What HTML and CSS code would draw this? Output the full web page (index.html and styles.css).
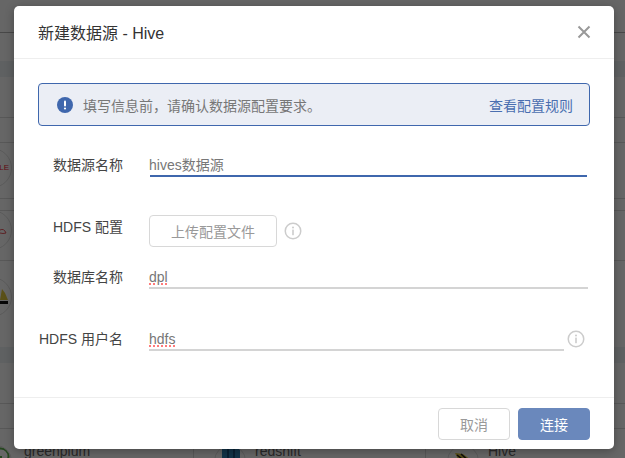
FILE: index.html
```html
<!DOCTYPE html>
<html lang="zh-CN">
<head>
    <meta charset="UTF-8">
    <meta name="viewport" content="width=device-width, initial-scale=1.0">
    <title>新建数据源 - Hive</title>
    <link rel="stylesheet" href="styles.css">
</head>
<body>

    <!-- page behind the dialog -->
    <div class="page">
        <div class="page_row page_top"></div>
        <div class="page_gap"></div>
        <div class="page_band"></div>
        <div class="page_row row_41"></div>
        <div class="page_row row_25"></div>
        <div class="page_row row_51">
            <div class="logo logo_oracle"><span>ORACLE</span></div>
        </div>
        <div class="page_row row_12"></div>
        <div class="page_row row_51">
            <div class="logo logo_red">
                <svg width="38" height="38" viewBox="0 0 38 38"><path d="M27 19 q4 -2 6 3 q-3 1 -6 0" fill="none" stroke="#e8545c" stroke-width="1"/></svg>
            </div>
        </div>
        <div class="page_plain">
            <div class="logo logo_bee">
                <svg width="38" height="38" viewBox="0 0 38 38"><path d="M27 22 L29 11 L32 15 L35 22 z" fill="#e2c83c"/><path d="M24 23 h11 v3 h-11 z" fill="#111"/></svg>
            </div>
        </div>
        <div class="page_band"></div>
        <div class="page_row row_41"></div>
        <div class="page_row row_25"></div>
        <div class="source_list">
            <div class="source source_gp">
                <div class="source_logo">
                    <svg width="30" height="30" viewBox="0 0 30 30"><circle cx="20" cy="10" r="7.5" fill="none" stroke="#5cb04e" stroke-width="2"/><path d="M20 10 v8" stroke="#5cb04e" stroke-width="2"/></svg>
                </div>
                <span>greenplum</span>
            </div>
            <div class="source source_rs">
                <div class="source_logo">
                    <svg width="30" height="30" viewBox="0 0 30 30"><rect x="7" y="0" width="18" height="30" fill="#2f7fb5"/><rect x="12" y="0" width="2" height="30" fill="#17527f"/><rect x="18" y="0" width="2" height="30" fill="#17527f"/></svg>
                </div>
                <span>redshift</span>
            </div>
            <div class="source source_hive">
                <div class="source_logo">
                    <svg width="30" height="30" viewBox="0 0 30 30"><path d="M7 7 l8 1 8 6 -1 9 -8 -2 z" fill="#e2c83c"/><path d="M9 9 l10 8 M8 13 l9 7 M13 8 l9 8" stroke="#222" stroke-width="1.5"/></svg>
                </div>
                <span>Hive</span>
            </div>
        </div>
    </div>

    <div class="mask"></div>

    <div class="dialog">
        <div class="dialog_head">
            <h2>新建数据源 - Hive</h2>
            <svg class="close_icon" width="14" height="14" viewBox="0 0 14 14"><path d="M1.5 1.5 L12.5 12.5 M12.5 1.5 L1.5 12.5" stroke="#999" stroke-width="2" fill="none"/></svg>
        </div>

        <div class="dialog_body">
            <div class="notice">
                <svg class="notice_icon" width="16" height="16" viewBox="0 0 16 16"><circle cx="8" cy="8" r="8" fill="#3f67ad"/><rect x="7" y="3.5" width="2" height="6" rx="1" fill="#fff"/><circle cx="8" cy="11.5" r="1.1" fill="#fff"/></svg>
                <span class="notice_text">填写信息前，请确认数据源配置要求。</span>
                <a class="notice_link">查看配置规则</a>
            </div>

            <div class="form_row row_name">
                <label>数据源名称</label>
                <div class="field field_active">hives数据源</div>
            </div>

            <div class="form_row row_upload">
                <label>HDFS 配置</label>
                <button class="upload_button">上传配置文件</button>
                <svg class="info_icon" width="18" height="18" viewBox="0 0 18 18"><circle cx="9" cy="9" r="7.75" fill="none" stroke="#ccc" stroke-width="1.5"/><rect x="8.2" y="7.6" width="1.6" height="5.6" fill="#ccc"/><circle cx="9" cy="5.4" r="1" fill="#ccc"/></svg>
            </div>

            <div class="form_row row_db">
                <label>数据库名称</label>
                <div class="field field_db"><span class="misspelt">dpl</span></div>
            </div>

            <div class="form_row row_user">
                <label>HDFS 用户名</label>
                <div class="field"><span class="misspelt">hdfs</span></div>
                <svg class="info_icon" width="18" height="18" viewBox="0 0 18 18"><circle cx="9" cy="9" r="7.75" fill="none" stroke="#ccc" stroke-width="1.5"/><rect x="8.2" y="7.6" width="1.6" height="5.6" fill="#ccc"/><circle cx="9" cy="5.4" r="1" fill="#ccc"/></svg>
            </div>
        </div>

        <div class="dialog_foot">
            <button class="cancel_button">取消</button>
            <button class="connect_button">连接</button>
        </div>
    </div>

</body>
</html>
```

FILE: styles.css
```css
body {
    margin: 0;
    height: 458px;
    overflow: hidden;
    background-color: #fff;
    font-family: "Liberation Sans", "Noto Sans CJK SC", sans-serif;
    font-size: 14px;
}

/* page behind the dialog */
.page {
    height: 458px;
    overflow: hidden;
}

.page_row {
    box-sizing: border-box;
    border-bottom: 1px solid #ddd;
}

.page_top {
    height: 33px;
    border-bottom-color: #b4b4b4;
}

.page_gap {
    height: 28px;
}

.page_band {
    height: 16px;
    background-color: #eef2f5;
}

.row_41 {
    height: 41px;
}

.row_25 {
    height: 25px;
}

.row_51 {
    height: 51px;
}

.row_12 {
    height: 12px;
}

.page_plain {
    height: 86px;
    padding-top: 16px;
    box-sizing: border-box;
}

.logo {
    box-sizing: border-box;
    width: 40px;
    height: 40px;
    margin-left: -28px;
    margin-top: 5px;
    border: 1px solid #e2e2e2;
    border-radius: 50%;
    position: relative;
    overflow: hidden;
}

.logo_oracle span {
    display: block;
    text-align: right;
    padding-right: 2px;
    margin-top: 14px;
    color: #f02030;
    font-size: 8px;
    line-height: 10px;
    white-space: nowrap;
}

.logo_red {
    margin-top: -1px;
}

.logo_bee {
    margin-top: 0;
}

.source_list {
    display: grid;
    grid-template-columns: 193px 232px 1fr;
    height: 33px;
    padding-top: 14px;
    box-sizing: border-box;
}

.source {
    display: flex;
    align-items: flex-start;
    gap: 9px;
    height: 40px;
    padding-left: 20px;
    border-left: 1px solid #ddd;
    color: #666;
    font-size: 14px;
    line-height: 16px;
}

.source_gp {
    padding-left: 0;
    margin-left: -20px;
    gap: 12px;
    border-left: 0;
}

.source_hive {
    padding-left: 21px;
}

.source_logo {
    flex: none;
    box-sizing: border-box;
    width: 32px;
    height: 32px;
    margin-top: 2px;
    border: 1px solid #e2e2e2;
    border-radius: 50%;
    overflow: hidden;
}

.source_logo svg {
    display: block;
}

.mask {
    position: absolute;
    top: 0;
    left: 0;
    right: 0;
    bottom: 0;
    background-color: rgba(0, 0, 0, 0.6);
}

/* dialog */
.dialog {
    position: absolute;
    top: 6px;
    left: 14px;
    width: 600px;
    background-color: #fff;
    border-radius: 5px;
    box-shadow: 0 2px 10px rgba(0, 0, 0, 0.3);
}

.dialog_head {
    display: flex;
    align-items: center;
    justify-content: space-between;
    height: 52px;
    padding: 0 23px 0 24px;
    border-bottom: 1px solid #eee;
}

.dialog_head h2 {
    margin: 0;
    font-size: 16px;
    font-weight: normal;
    color: #333;
}

.dialog_body {
    padding: 24px 24px 46px;
}

.notice {
    display: flex;
    align-items: center;
    box-sizing: border-box;
    height: 43px;
    padding: 0 16px 0 18px;
    background-color: #ebeef5;
    border: 1px solid #3f67ad;
    border-radius: 4px;
}

.notice_icon {
    margin-right: 10px;
}

.notice_text {
    flex: 1;
    color: #777;
}

.notice_link {
    color: #4a6fb0;
}

.form_row {
    display: flex;
    align-items: flex-start;
}

.form_row label {
    flex: none;
    box-sizing: border-box;
    width: 85px;
    text-align: right;
    line-height: 20px;
    color: #444;
    margin-right: 26px;
}

.row_name {
    margin-top: 29px;
}

.row_upload {
    margin-top: 38px;
}

.row_upload label {
    margin-top: 2px;
}

.row_db {
    margin-top: 20px;
}

.row_user {
    margin-top: 40px;
}

.field {
    flex: 1;
    height: 20px;
    line-height: 20px;
    color: #777;
    border-bottom: 2px solid #d4d4d4;
}

.field_active {
    border-bottom-color: #3f67ad;
    margin-left: 1px;
    margin-right: 3px;
    text-indent: -1px;
}

.field_db {
    margin-right: 2px;
}

.misspelt {
    text-decoration: underline dotted #ff7a7a 2px;
    text-underline-offset: 1px;
}

.upload_button {
    box-sizing: border-box;
    width: 128px;
    height: 32px;
    background-color: #fff;
    border: 1px solid #d8d8d8;
    border-radius: 4px;
    color: #999;
    font-family: inherit;
    font-size: 14px;
    padding: 0;
}

.row_upload .info_icon {
    margin: 7px 0 0 7px;
}

.row_user .info_icon {
    margin: 1px 5px 0 3px;
}

.dialog_foot {
    display: flex;
    justify-content: flex-end;
    gap: 8px;
    height: 31px;
    padding: 10px 24px 10px;
    border-top: 1px solid #eee;
}

.dialog_foot button {
    box-sizing: border-box;
    width: 72px;
    height: 32px;
    border-radius: 4px;
    font-family: inherit;
    font-size: 14px;
    padding: 0;
}

.cancel_button {
    background-color: #fff;
    border: 1px solid #d8d8d8;
    color: #999;
}

.connect_button {
    background-color: #6a88bc;
    border: 1px solid #6a88bc;
    color: #fff;
}
```
